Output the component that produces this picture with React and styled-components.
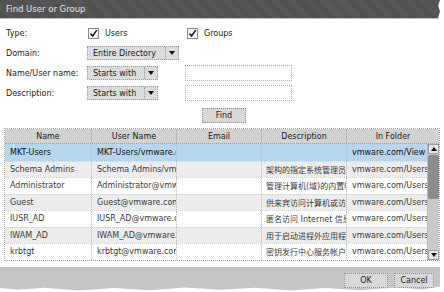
import React from "react";
import styled, { createGlobalStyle } from "styled-components";

const Global = createGlobalStyle`
  html, body { margin: 0; padding: 0; background: #ffffff; }
  body { font-family: "DejaVu Sans", "Noto Sans CJK SC", sans-serif; font-size: 8px; color: #222; }
`;

const Dialog = styled.div`
  width: 440px;
  height: 292px;
  display: flex;
  flex-direction: column;
  background: #fff;
`;

const TitleBar = styled.div`
  height: 18px;
  background: repeating-linear-gradient(45deg, #4e4e4e 0 1px, #5a5a5a 1px 2px);
  color: #e4e4e4;
  font-size: 8.5px;
  display: flex;
  align-items: center;
  padding-left: 6px;
  border-bottom: 1px solid #bdbdbd;
  clip-path: polygon(0 0, 100% 0, 99.6% 30%, 100% 60%, 99.5% 100%, 0 100%);
`;

const Form = styled.div`
  display: flex;
  flex-direction: column;
  padding-top: 4px;
`;

const FormRow = styled.div`
  height: 20px;
  display: flex;
  align-items: center;
`;

const Label = styled.div`
  width: 81px;
  padding-left: 6px;
  flex: none;
`;

const CheckItem = styled.label`
  width: 99px;
  display: flex;
  align-items: center;
  gap: 6px;
  padding-left: 1px;
  &:last-child { width: auto; padding-left: 0; }
`;

const Box = styled.span`
  width: 9px;
  height: 9px;
  border: 1px solid #8a8a8a;
  background: #f4f4f4;
  display: flex;
  align-items: center;
  justify-content: center;
`;

const Select = styled.div`
  width: ${(p) => p.$w}px;
  height: 14px;
  box-sizing: border-box;
  border: 1px dotted #9a9a9a;
  background: #dcdcdc;
  display: flex;
  align-items: center;
  flex: none;
`;

const SelectText = styled.span`
  flex: 1;
  padding-left: 5px;
  color: #222;
`;

const SelectArrow = styled.span`
  width: 12px;
  height: 100%;
  border-left: 1px dotted #9a9a9a;
  display: flex;
  align-items: center;
  justify-content: center;
  &::after {
    content: "";
    border-left: 3px solid transparent;
    border-right: 3px solid transparent;
    border-top: 4px solid #111;
  }
`;

const Input = styled.div`
  width: 107px;
  height: 16px;
  box-sizing: border-box;
  border: 1px dotted #b0b0b0;
  background: #fff;
  margin-left: 27px;
`;

const FindRow = styled.div`
  display: flex;
  padding: 5px 0 0 202px;
`;

const Button = styled.div`
  width: ${(p) => p.$w}px;
  height: 15px;
  box-sizing: border-box;
  border: 1px dotted #8e8e8e;
  background: #d8d8d8;
  display: flex;
  align-items: center;
  justify-content: center;
  color: #222;
`;

const Table = styled.div`
  margin: 5px 0 0 4px;
  width: 436px;
  box-sizing: border-box;
  border: 1px dotted #a8a8a8;
  display: flex;
  flex-direction: column;
`;

const HeaderRow = styled.div`
  display: grid;
  grid-template-columns: 86px 85px 85px 85px 1fr;
  height: 14px;
  background: #d2d2d2;
  border-bottom: 1px dotted #a0a0a0;
`;

const HeadCell = styled.div`
  display: flex;
  align-items: center;
  justify-content: center;
  color: #222;
  border-left: 1px dotted #a0a0a0;
  &:first-child { border-left: none; }
`;

const Body = styled.div`
  display: flex;
`;

const Rows = styled.div`
  flex: 1;
  display: flex;
  flex-direction: column;
`;

const Row = styled.div`
  display: grid;
  grid-template-columns: 86px 85px 85px 85px 1fr;
  height: 16.5px;
  background: ${(p) => (p.$sel ? "#b6d6ee" : p.$alt ? "#ececec" : "#ffffff")};
  border-top: ${(p) => (p.$first ? "none" : "1px dotted #d0d0d0")};
  box-sizing: border-box;
`;

const Cell = styled.div`
  display: flex;
  align-items: center;
  padding-left: ${(p) => (p.$pad ?? 5)}px;
  white-space: nowrap;
  overflow: hidden;
  min-width: 0;
  color: ${(p) => (p.$sel ? "#111" : "#3a3a3a")};
  border-left: 1px dotted #b8b8b8;
  &:first-child { border-left: none; }
`;

const Scrollbar = styled.div`
  width: 11px;
  display: flex;
  flex-direction: column;
  background: #c9c9c9;
  border-left: 1px solid #bbb;
`;

const ScrollBtn = styled.div`
  height: 10px;
  background: #e6e6e6;
  border: 1px solid #9c9c9c;
  box-sizing: border-box;
  display: flex;
  align-items: center;
  justify-content: center;
  &::after {
    content: "";
    border-left: 3px solid transparent;
    border-right: 3px solid transparent;
    ${(p) => (p.$down ? "border-top: 4px solid #111;" : "border-bottom: 4px solid #111;")}
  }
`;

const Thumb = styled.div`
  height: 44px;
  margin-top: 1px;
  background: #8c8c8c;
  border-radius: 2px;
`;

const Track = styled.div`
  flex: 1;
`;

const Footer = styled.div`
  margin-top: 6px;
  height: 25px;
  background: #c6c6c6;
  display: flex;
  justify-content: flex-end;
  align-items: flex-start;
  gap: 6px;
  padding: 6px 6px 0 0;
  box-sizing: border-box;
  clip-path: polygon(0 0, 100% 0, 100% 80%, 96% 92%, 90% 84%, 82% 95%, 74% 86%, 66% 96%, 58% 85%, 50% 93%, 42% 84%, 34% 95%, 26% 86%, 18% 96%, 10% 85%, 4% 93%, 0 86%);
`;

const Check = () => (
  <svg width="9" height="9" viewBox="0 0 9 9">
    <path d="M1.5 4.5 L3.6 7 L7.8 1.2" fill="none" stroke="#111" strokeWidth="1.4" />
  </svg>
);

const data = [
  ["MKT-Users", "MKT-Users/vmware.com", "", "", "vmware.com/View Groups"],
  ["Schema Admins", "Schema Admins/vmware.com", "", "架构的指定系统管理员", "vmware.com/Users"],
  ["Administrator", "Administrator@vmware.com", "", "管理计算机(域)的内置帐户", "vmware.com/Users"],
  ["Guest", "Guest@vmware.com", "", "供来宾访问计算机或访问域的内置帐户", "vmware.com/Users"],
  ["IUSR_AD", "IUSR_AD@vmware.com", "", "匿名访问 Internet 信息服务的内置帐户", "vmware.com/Users"],
  ["IWAM_AD", "IWAM_AD@vmware.com", "", "用于启动进程外应用程序的 Internet 信息服务的内置帐户", "vmware.com/Users"],
  ["krbtgt", "krbtgt@vmware.com", "", "密钥发行中心服务帐户", "vmware.com/Users"],
];

export default function App() {
  return (
    <>
      <Global />
      <Dialog>
        <TitleBar>Find User or Group</TitleBar>
        <Form>
          <FormRow>
            <Label>Type:</Label>
            <CheckItem>
              <Box><Check /></Box>Users
            </CheckItem>
            <CheckItem>
              <Box><Check /></Box>Groups
            </CheckItem>
          </FormRow>
          <FormRow>
            <Label>Domain:</Label>
            <Select $w={92}>
              <SelectText>Entire Directory</SelectText>
              <SelectArrow />
            </Select>
          </FormRow>
          <FormRow>
            <Label>Name/User name:</Label>
            <Select $w={71}>
              <SelectText>Starts with</SelectText>
              <SelectArrow />
            </Select>
            <Input />
          </FormRow>
          <FormRow>
            <Label>Description:</Label>
            <Select $w={71}>
              <SelectText>Starts with</SelectText>
              <SelectArrow />
            </Select>
            <Input />
          </FormRow>
        </Form>
        <FindRow>
          <Button $w={44}>Find</Button>
        </FindRow>
        <Table>
          <HeaderRow>
            <HeadCell>Name</HeadCell>
            <HeadCell>User Name</HeadCell>
            <HeadCell>Email</HeadCell>
            <HeadCell>Description</HeadCell>
            <HeadCell>In Folder</HeadCell>
          </HeaderRow>
          <Body>
            <Rows>
              {data.map((r, i) => (
                <Row key={i} $sel={i === 0} $alt={i % 2 === 1} $first={i === 0}>
                  {r.map((c, j) => (
                    <Cell key={j} $sel={i === 0} $pad={j === 3 ? 4 : 5}>{c}</Cell>
                  ))}
                </Row>
              ))}
            </Rows>
            <Scrollbar>
              <ScrollBtn />
              <Thumb />
              <Track />
              <ScrollBtn $down />
            </Scrollbar>
          </Body>
        </Table>
        <Footer>
          <Button $w={44}>OK</Button>
          <Button $w={40}>Cancel</Button>
        </Footer>
      </Dialog>
    </>
  );
}
